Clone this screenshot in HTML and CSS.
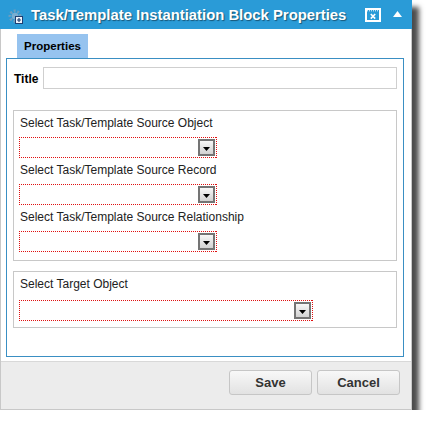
FILE: index.html
```html
<!DOCTYPE html>
<html>
<head>
<meta charset="utf-8">
<link rel="stylesheet" href="styles.css">
</head>
<body>
<div class="dialog">
  <div class="header">
    <svg class="hicon" width="16" height="16" viewBox="0 0 16 16">
      <circle cx="7" cy="7" r="5" fill="none" stroke="#7f9fb8" stroke-width="3" stroke-dasharray="2 1.6" opacity="0.8"/>
      <circle cx="7" cy="7" r="3.2" fill="#8fb3cf" opacity="0.8"/>
      <rect x="7.5" y="7.5" width="7" height="7" fill="#eef4fb" stroke="#1d3f73" stroke-width="1"/>
      <path d="M11 9 V13 M9 11 H13" stroke="#1d3f73" stroke-width="1.2"/>
    </svg>
    <span class="htitle">Task/Template Instantiation Block Properties</span>
    <svg class="hclose" width="16" height="14" viewBox="0 0 16 14">
      <rect x="1" y="1" width="14" height="12" fill="none" stroke="#fff" stroke-width="2"/>
      <line x1="2" y1="2.8" x2="14" y2="2.8" stroke="#fff" stroke-width="1" stroke-dasharray="1 1"/>
      <path d="M5.8 6 L10.2 10.6 M10.2 6 L5.8 10.6" stroke="#fff" stroke-width="1.6"/>
    </svg>
    <svg class="hcollapse" width="9" height="6" viewBox="0 0 9 6">
      <polygon points="0,6 4.5,0 9,6" fill="#fff"/>
    </svg>
  </div>
  <div class="tabs">
    <div class="tab">Properties</div>
  </div>
  <div class="panel">
    <div class="title-row">
      <label class="title-label">Title</label>
      <div class="title-input"></div>
    </div>
    <div class="group group-first">
      <div class="label">Select Task/Template Source Object</div>
      <div class="select short"><span class="drop"><svg width="7" height="4" viewBox="0 0 7 4"><polygon points="0,0 7,0 3.5,4" fill="#000"/></svg></span></div>
      <div class="label">Select Task/Template Source Record</div>
      <div class="select short"><span class="drop"><svg width="7" height="4" viewBox="0 0 7 4"><polygon points="0,0 7,0 3.5,4" fill="#000"/></svg></span></div>
      <div class="label">Select Task/Template Source Relationship</div>
      <div class="select short last"><span class="drop"><svg width="7" height="4" viewBox="0 0 7 4"><polygon points="0,0 7,0 3.5,4" fill="#000"/></svg></span></div>
    </div>
    <div class="group group-second">
      <div class="label label-target">Select Target Object</div>
      <div class="select long last"><span class="drop"><svg width="7" height="4" viewBox="0 0 7 4"><polygon points="0,0 7,0 3.5,4" fill="#000"/></svg></span></div>
    </div>
  </div>
  <div class="footer">
    <button class="btn">Save</button>
    <button class="btn">Cancel</button>
  </div>
</div>
</body>
</html>
```
FILE: styles.css
```css
html, body {
  margin: 0;
  padding: 0;
  background: #fff;
}
body {
  font-family: "Liberation Sans", Arial, sans-serif;
  font-size: 12px;
  color: #222;
}
.dialog {
  width: 412px;
  box-sizing: border-box;
  border-left: 1px solid #c8c8c8;
  border-right: 1px solid #c8c8c8;
  border-bottom: 1px solid #c8c8c8;
  background: #fff;
  box-shadow: 7px 7px 5px rgba(0, 0, 0, 0.7);
}
.header {
  height: 29px;
  margin: 0 -1px;
  background: #2a9bd7;
  display: flex;
  align-items: center;
  padding-left: 8px;
}
.hicon {
  flex: none;
  margin-top: 4px;
}
.htitle {
  margin-left: 7px;
  color: #fff;
  font-weight: bold;
  font-size: 14.85px;
  text-shadow: 1px 1px 1px rgba(0, 0, 0, 0.45);
  white-space: nowrap;
  margin-top: 1px;
}
.hclose {
  margin-left: 19px;
  flex: none;
}
.hcollapse {
  margin-left: 12px;
  flex: none;
  margin-top: -1px;
}
.tabs {
  padding: 5px 0 0 16px;
  display: flex;
}
.tab {
  width: 71px;
  height: 24px;
  background: #96c3ef;
  color: #000;
  font-weight: bold;
  font-size: 11.5px;
  display: flex;
  align-items: center;
  justify-content: center;
}
.panel {
  margin: 0 7px 0 5px;
  border: 1px solid #3a8fc3;
  padding: 8px 6px 28px 7px;
}
.title-row {
  display: flex;
  align-items: center;
  height: 22px;
}
.title-label {
  font-weight: bold;
  color: #000;
  width: 29px;
  flex: none;
  margin-top: 2px;
}
.title-input {
  flex: 1;
  height: 22px;
  box-sizing: border-box;
  border: 1px solid #cfcfcf;
  background: #fff;
}
.group {
  border: 1px solid #c8c8c8;
  margin: 0 0 0 -1px;
  padding: 4px 5px 6px 5px;
}
.group-first {
  margin-top: 21px;
  padding-bottom: 8px;
}
.group-second {
  margin-top: 10px;
}
.label {
  line-height: 16px;
  height: 16px;
  padding-left: 1px;
  margin-bottom: 6px;
  white-space: nowrap;
}
.label-target {
  margin-bottom: 8px;
}
.select {
  height: 21px;
  box-sizing: border-box;
  padding: 1px 2px 1px 1px;
  background:
    repeating-linear-gradient(90deg, #e01010 0 1px, transparent 1px 2px) top left / 100% 1px no-repeat,
    repeating-linear-gradient(90deg, #e01010 0 1px, transparent 1px 2px) bottom left / 100% 1px no-repeat,
    repeating-linear-gradient(180deg, #e01010 0 1px, transparent 1px 2px) top left / 1px 100% no-repeat,
    repeating-linear-gradient(180deg, #e01010 0 1px, transparent 1px 2px) top right / 1px 100% no-repeat,
    #fff;
  display: flex;
  align-items: center;
  justify-content: flex-end;
  margin-bottom: 4px;
}
.select.last {
  margin-bottom: 0;
}
.group-first .select.last {
  margin-top: 1px;
}
.short {
  width: 198px;
}
.long {
  width: 294px;
}
.drop {
  width: 17px;
  height: 17px;
  box-sizing: border-box;
  border: 2px solid #747474;
  background: linear-gradient(#f7f7f7, #d2d2d2);
  display: flex;
  align-items: center;
  justify-content: center;
  padding-top: 2px;
}
.drop svg {
  display: block;
}
.footer {
  margin-top: 4px;
  border-top: 1px solid #d8d8d8;
  background: #ececec;
  height: 48px;
  box-sizing: border-box;
  display: flex;
  justify-content: flex-end;
  align-items: flex-start;
  padding: 8px 11px 0 0;
  gap: 5px;
}
.btn {
  width: 83px;
  height: 25px;
  border: 1px solid #c6c6c6;
  border-radius: 3px;
  background: linear-gradient(#f8f8f8, #e2e2e2);
  font-family: "Liberation Sans", Arial, sans-serif;
  font-weight: bold;
  font-size: 13px;
  color: #333;
  padding: 0;
}
```
